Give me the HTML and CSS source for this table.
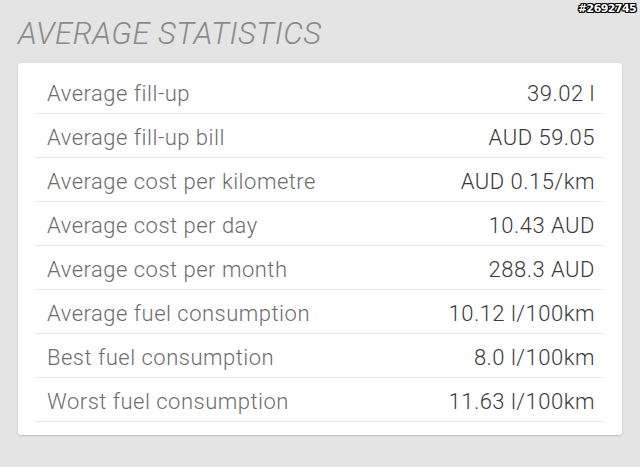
FILE: index.html
```html
<!DOCTYPE html>
<html>
<head>
<meta charset="utf-8">
<link rel="stylesheet" href="styles.css">
</head>
<body>
<div class="badge">#2692745</div>
<h1 class="title">AVERAGE STATISTICS</h1>
<div class="card">
  <div class="row"><span class="label">Average fill-up</span><span class="value">39.02 l</span></div>
  <div class="row"><span class="label">Average fill-up bill</span><span class="value">AUD 59.05</span></div>
  <div class="row"><span class="label">Average cost per kilometre</span><span class="value">AUD 0.15/km</span></div>
  <div class="row"><span class="label">Average cost per day</span><span class="value">10.43 AUD</span></div>
  <div class="row"><span class="label">Average cost per month</span><span class="value">288.3 AUD</span></div>
  <div class="row"><span class="label">Average fuel consumption</span><span class="value">10.12 l/100km</span></div>
  <div class="row"><span class="label">Best fuel consumption</span><span class="value">8.0 l/100km</span></div>
  <div class="row"><span class="label">Worst fuel consumption</span><span class="value">11.63 l/100km</span></div>
</div>
</body>
</html>
```
FILE: styles.css
```css
html, body {
  margin: 0;
  padding: 0;
}
body {
  background: #e4e4e4;
  font-family: Roboto, "Liberation Sans", sans-serif;
  width: 640px;
  height: 467px;
  position: relative;
  overflow: hidden;
}
.badge {
  position: absolute;
  top: 2px;
  right: 4px;
  font-family: "DejaVu Sans", sans-serif;
  font-size: 11px;
  font-weight: bold;
  color: #fff;
  letter-spacing: -0.6px;
  text-shadow: -1px 0 #000, 1px 0 #000, 0 -1px #000, 0 1px #000, -1px -1px #000, 1px 1px #000, -1px 1px #000, 1px -1px #000;
}
.title {
  margin: 0;
  padding: 16px 0 0 18px;
  height: 48px;
  box-sizing: border-box;
  font-size: 31px;
  line-height: 35px;
  font-weight: 300;
  font-style: italic;
  letter-spacing: 0.5px;
  color: #8a8a8a;
}
.card {
  margin: 15px 18px 0 18px;
  width: 604px;
  box-sizing: border-box;
  background: #fff;
  border-radius: 3px;
  box-shadow: 0 1px 2px rgba(0,0,0,0.18);
  padding: 7px 18px 13px 17px;
}
.row {
  display: flex;
  justify-content: space-between;
  align-items: center;
  height: 44px;
  box-sizing: border-box;
  border-bottom: 1px solid #e8e8e8;
  padding: 3px 9px 0 12px;
  font-size: 22px;
  font-weight: 300;
  letter-spacing: 0.5px;
}
.label {
  color: #6d6d6d;
}
.value {
  color: #3a3a3a;
}
```
